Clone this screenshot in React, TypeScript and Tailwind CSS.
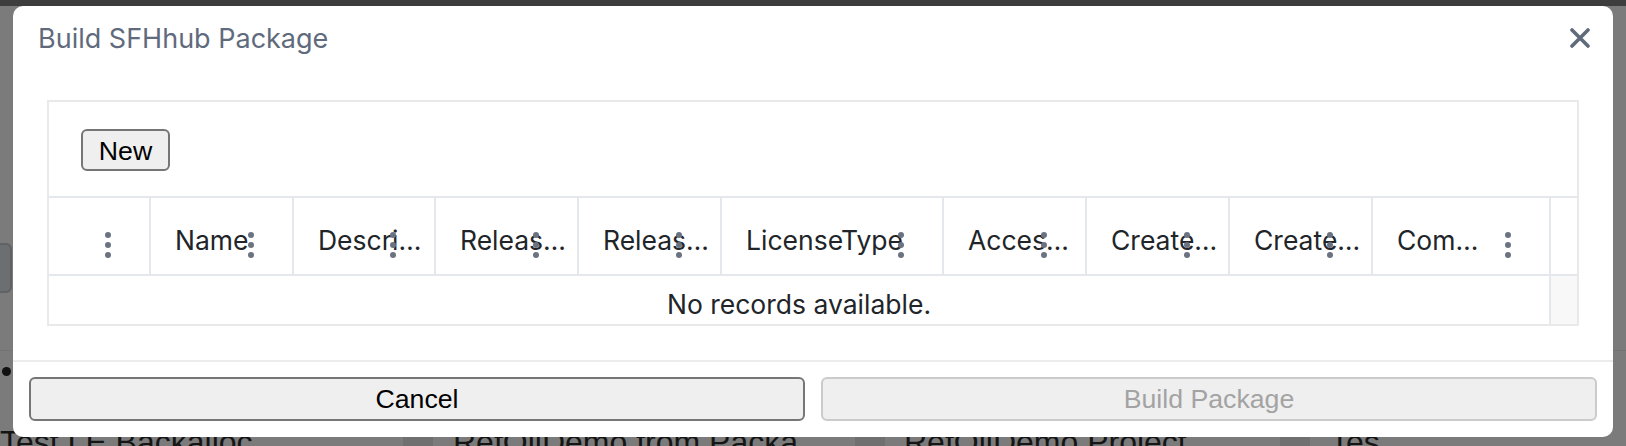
import { type ReactNode } from 'react'

const columns = [
  { label: '', width: 'w-[100px]' },
  { label: 'Name', width: 'w-[143px]' },
  { label: 'Descri…', width: 'w-[142px]' },
  { label: 'Releas…', width: 'w-[143px]' },
  { label: 'Releas…', width: 'w-[143px]' },
  { label: 'LicenseType', width: 'w-[222px]' },
  { label: 'Acces…', width: 'w-[143px]' },
  { label: 'Create…', width: 'w-[143px]' },
  { label: 'Create…', width: 'w-[143px]' },
  { label: 'Com…', width: 'w-[178px]' },
]

function Kebab() {
  return (
    <span className="absolute right-[38px] top-[34px] flex flex-col gap-[4px]">
      <span className="block w-[6px] h-[6px] rounded-full bg-[#6b7280]" />
      <span className="block w-[6px] h-[6px] rounded-full bg-[#6b7280]" />
      <span className="block w-[6px] h-[6px] rounded-full bg-[#6b7280]" />
    </span>
  )
}

function NativeButton({ children, disabled, className }: { children: ReactNode; disabled?: boolean; className?: string }) {
  return (
    <button
      disabled={disabled}
      className={`bg-[#efefef] rounded-[6px] text-[26.7px] font-['Liberation_Sans',Arial,sans-serif] ${
        disabled ? 'border-2 border-[#cbcbcb] text-[#a3a3a3]' : 'border-2 border-[#767676] text-black'
      } ${className ?? ''}`}
    >
      {children}
    </button>
  )
}

export default function App() {
  return (
    <div className="relative w-[1626px] h-[446px] overflow-hidden bg-[#7b7b7b] font-['Inter',sans-serif]">
      {/* page behind the overlay */}
      <div className="h-[6px] bg-[#3d3d3d]" />
      <div className="absolute left-[-10px] top-[243px] w-[22px] h-[50px] rounded-[6px] border-2 border-[#5f6163] bg-[#6c6f72]" />
      <div className="absolute left-0 top-[350px] w-full h-[1px] bg-[#737373]" />
      <div className="absolute left-[2px] top-[367px] w-[9px] h-[9px] rounded-full bg-[#111]" />
      <div className="absolute left-0 top-[426px] flex w-full text-[32px] leading-[32px] text-[#151515] font-['Liberation_Sans',Arial,sans-serif]">
        <div className="w-[403px] whitespace-nowrap">Test LE Backalloc</div>
        <div className="w-[452px] whitespace-nowrap border-l-[30px] border-[#707070] pl-[20px]">RefOilDemo from Packa</div>
        <div className="w-[425px] whitespace-nowrap border-l-[30px] border-[#707070] pl-[19px]">RefOilDemo Project</div>
        <div className="flex-1 whitespace-nowrap border-l-[30px] border-[#707070] pl-[20px]">Tes</div>
      </div>

      {/* dialog */}
      <div className="absolute left-[13px] top-[6px] w-[1600px] h-[431px] rounded-[10px] bg-white flex flex-col">
        <div className="h-[64px] flex items-center justify-between pl-[25px] pr-[23px]">
          <h2 className="text-[27px] text-[#5f6b7d] font-normal pt-[2px]">Build SFHhub Package</h2>
          <svg width="20" height="20" viewBox="0 0 20 20" className="text-[#5f6b7a]">
            <path d="M2 2 L18 18 M18 2 L2 18" stroke="currentColor" strokeWidth="3.6" strokeLinecap="round" />
          </svg>
        </div>

        <div className="flex-1 px-[34px] pt-[30px]">
          <div className="border-2 border-[#e9e9e9] text-[26.5px] text-[#212529]">
            <div className="h-[94px] flex items-center pl-[32px] pt-[2px]">
              <NativeButton className="w-[89px] h-[42px]">New</NativeButton>
            </div>
            <div className="flex h-[80px] border-y-2 border-[#e4e7ec]">
              {columns.map((c, i) => (
                <div
                  key={i}
                  className={`relative ${c.width} shrink-0 flex items-center pl-[24px] pt-[9px] whitespace-nowrap ${i > 0 ? 'border-l-2 border-[#e4e7ec]' : ''}`}
                >
                  {c.label}
                  <Kebab />
                </div>
              ))}
              <div className="flex-1 border-l-2 border-[#e4e7ec]" />
            </div>
            <div className="flex h-[48px]">
              <div className="w-[1500px] flex items-center justify-center pt-[10px]">No records available.</div>
              <div className="flex-1 border-l-2 border-[#e4e7ec] bg-[#f8f8f8]" />
            </div>
          </div>
        </div>

        <div className="border-t-2 border-[#ececec] px-[16px] pt-[15px] pb-[16px] flex gap-[16px]">
          <NativeButton className="flex-1 h-[44px]">Cancel</NativeButton>
          <NativeButton className="flex-1 h-[44px]" disabled>
            Build Package
          </NativeButton>
        </div>
      </div>
    </div>
  )
}
